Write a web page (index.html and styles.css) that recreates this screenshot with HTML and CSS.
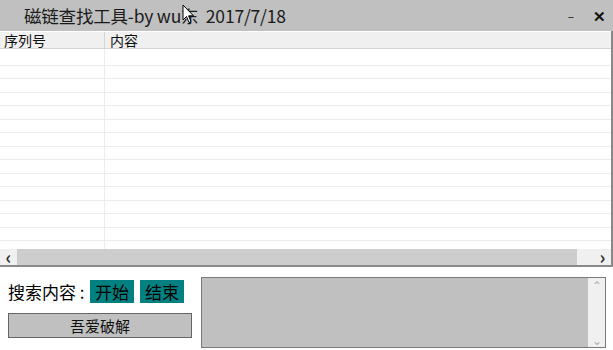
FILE: index.html
```html
<!DOCTYPE html>
<html>
<head>
  <meta charset="utf-8">
  <link rel="stylesheet" href="styles.css">
</head>
<body>
  <div class="window">
    <div class="titlebar">
      <div class="title">磁链查找工具-by wu东&nbsp; 2017/7/18</div>
      <div class="controls">
        <span class="ctl min">&#8211;</span>
        <span class="ctl close">&#10005;</span>
      </div>
      <svg class="cursor" width="13" height="21" viewBox="0 0 13 21">
        <path d="M1 1 L1 16 L4.5 12.5 L7 18.5 L9 17.6 L6.6 11.8 L11.5 11.8 Z" fill="#fff" stroke="#000" stroke-width="1"/>
      </svg>
    </div>

    <div class="list">
      <div class="list-head">
        <div class="col col-no">序列号</div>
        <div class="col col-text">内容</div>
      </div>
      <div class="list-body">
        <div class="col-line"></div>
      </div>
      <div class="hscroll">
        <div class="arrow">&#8249;</div>
        <div class="thumb"></div>
        <div class="track"></div>
        <div class="arrow">&#8250;</div>
      </div>
    </div>

    <div class="bottom">
      <div class="search-side">
        <div class="search-row">
          <span class="label">搜索内容 :</span>
          <button class="teal-btn">开始</button>
          <button class="teal-btn">结束</button>
        </div>
        <button class="grey-btn">吾爱破解</button>
      </div>
      <div class="output">
        <div class="output-text"></div>
        <div class="vscroll">
          <span class="varrow">&#8963;</span>
          <span class="varrow down">&#8964;</span>
        </div>
      </div>
    </div>
  </div>
</body>
</html>
```

FILE: styles.css
```css
body {
  margin: 0;
  width: 613px;
  height: 350px;
  background: #ffffff;
  font-family: "Noto Sans CJK SC", "Liberation Sans", sans-serif;
  color: #000000;
  overflow: hidden;
}

.window {
  width: 613px;
  height: 350px;
  display: flex;
  flex-direction: column;
}

/* title bar */
.titlebar {
  position: relative;
  height: 31px;
  background: #c0c0c0;
  display: flex;
  align-items: center;
  justify-content: space-between;
  flex-shrink: 0;
}

.title {
  padding-left: 24px;
  font-size: 17.5px;
  letter-spacing: -0.2px;
  color: #1a1a1a;
  white-space: nowrap;
}

.controls {
  display: flex;
  align-items: center;
  padding-right: 2px;
}

.ctl {
  display: inline-block;
  text-align: center;
  color: #111;
}

.min {
  width: 32px;
  font-size: 12px;
}

.close {
  width: 24px;
  font-size: 15px;
  font-weight: bold;
}

.cursor {
  position: absolute;
  left: 182px;
  top: 4px;
}

/* list view */
.list {
  height: 234px;
  border-right: 2px solid #8a8a8a;
  border-bottom: 2px solid #8a8a8a;
  display: flex;
  flex-direction: column;
  flex-shrink: 0;
}

.list-head {
  display: flex;
  height: 16px;
  background: #f0f0f0;
  border-top: 1px solid #ffffff;
  border-bottom: 1px solid #d5d5d5;
}

.col {
  font-size: 14px;
  line-height: 17px;
  color: #111;
  white-space: nowrap;
}

.col-no {
  width: 100px;
  padding-left: 4px;
  border-right: 1px solid #d5d5d5;
}

.col-text {
  padding-left: 5px;
}

.list-body {
  position: relative;
  flex: 1;
  background-color: #ffffff;
  background-image: repeating-linear-gradient(to bottom, transparent 0, transparent 12.5px, #ececec 12.5px, #ececec 13.5px);
  background-position: 0 3px;
}

.col-line {
  position: absolute;
  left: 104px;
  top: 0;
  bottom: 0;
  width: 1px;
  background: #ececec;
}

.hscroll {
  height: 16px;
  display: flex;
  background: #f0f0f0;
}

.arrow {
  width: 17px;
  text-align: center;
  font-size: 18px;
  line-height: 14px;
  font-weight: bold;
  color: #333;
}

.thumb {
  width: 560px;
  background: #cdcdcd;
}

.track {
  flex: 1;
}

/* bottom panel */
.bottom {
  display: flex;
  padding: 10px 0 0 8px;
  gap: 9px;
}

.search-side {
  width: 184px;
  display: flex;
  flex-direction: column;
  gap: 10px;
}

.search-row {
  display: flex;
  align-items: center;
  height: 23px;
  margin-top: 3px;
}

.label {
  font-size: 17px;
  width: 82px;
  white-space: nowrap;
}

.teal-btn {
  height: 23px;
  padding: 0 5px;
  margin-right: 6px;
  border: none;
  background: #008080;
  color: #000;
  font-family: inherit;
  font-size: 17px;
  line-height: 23px;
}

.grey-btn {
  height: 25px;
  width: 184px;
  border: 1px solid #666;
  background: #c0c0c0;
  font-family: inherit;
  font-size: 15px;
  color: #111;
  padding: 0;
}

.output {
  width: 403px;
  height: 69px;
  border: 1px solid #7a7a7a;
  display: flex;
  background: #c0c0c0;
}

.output-text {
  flex: 1;
}

.vscroll {
  width: 17px;
  background: #f0f0f0;
  display: flex;
  flex-direction: column;
  justify-content: space-between;
  align-items: center;
  color: #b0b0b0;
  font-size: 12px;
}

.varrow {
  line-height: 14px;
}
```
